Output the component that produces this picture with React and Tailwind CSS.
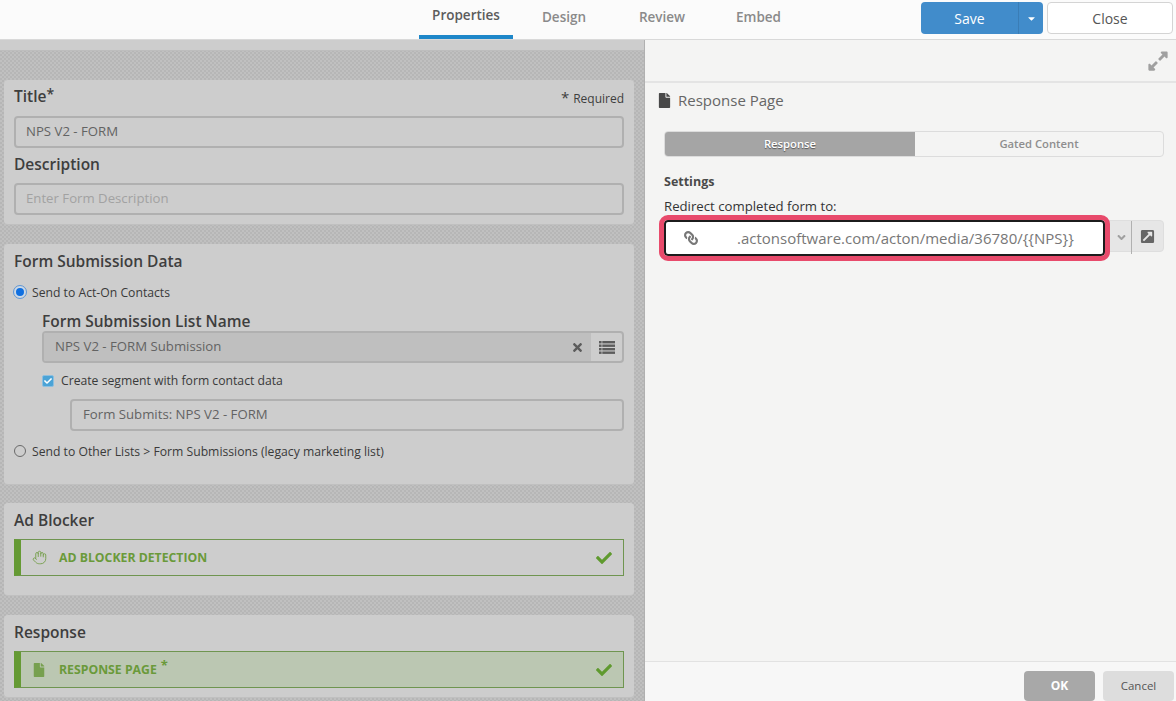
import React from "react";
import { FaFile, FaLink, FaTimes, FaCheck, FaExpandAlt, FaExternalLinkSquareAlt, FaCaretDown, FaAngleDown } from "react-icons/fa";
import { Hand } from "lucide-react";

function Card({ className, children }) {
  return <section className={"mx-1 w-[630px] shrink-0 bg-[#cdcdcd] rounded-sm border-b border-[#c0c0c0] px-2.5 " + className}>{children}</section>;
}

function Heading({ children, className = "" }) {
  return <h2 className={"text-[15.5px] leading-[22px] font-semibold text-[#3e3e3e] " + className}>{children}</h2>;
}

function Field({ children, className = "", muted }) {
  return (
    <div className={"h-8 flex items-center px-[10px] rounded border-2 border-[#b0b0b0] text-[13.2px] " + (muted ? "text-[#a2a2a2] " : "text-[#636363] ") + className}>
      {children}
    </div>
  );
}

function ListIcon() {
  return (
    <svg width="16" height="13" viewBox="0 0 16 13" fill="#5c5c5c">
      <rect x="0" y="0" width="16" height="2.4" />
      <rect x="0" y="3.5" width="16" height="2.4" />
      <rect x="0" y="7" width="16" height="2.4" />
      <rect x="0" y="10.5" width="16" height="2.4" />
      <rect x="2.6" y="0" width="0.7" height="13" fill="#cdcdcd" />
    </svg>
  );
}

function Accordion({ icon, label, star, active }) {
  return (
    <div className={"h-[37px] flex items-center border border-[#6f9550] border-l-[7px] border-l-[#659a34] pl-[11px] pr-[11px] " + (active ? "bg-[#bbc7b2]" : "")}>
      <span className="w-[27px] text-[#77a04f] text-[14px]">{icon}</span>
      <span className="mt-px text-[12.25px] font-bold text-[#6a9a3a]">{label}</span>
      {star && <span className="ml-1 text-[13px] leading-none font-bold text-[#6a9a3a] -mt-2">*</span>}
      <FaCheck className="ml-auto text-[#5f9a2e] text-[16px]" />
    </div>
  );
}

function Tab({ children, active, className }) {
  return (
    <div className={"h-full flex items-center justify-center text-[13.5px] font-semibold " + (active ? "text-[#5c5c5c] border-b-[4px] border-[#1e87c9] pb-[5px]" : "text-[#8a8a8a] pb-[5px]") + " " + className}>
      {children}
    </div>
  );
}

export default function App() {
  return (
    <div className="w-[1176px] h-[701px] overflow-hidden flex flex-col bg-white font-['Open_Sans',sans-serif] text-[#333]">
      <header className="h-10 shrink-0 flex bg-[#fbfbfb] border-b border-[#d9d9d9]">
        <nav className="ml-[419px] h-full flex">
          <Tab active className="w-[94px]">Properties</Tab>
          <Tab className="w-[102px]">Design</Tab>
          <Tab className="w-[94px]">Review</Tab>
          <Tab className="w-[100px]"><span className="-ml-[1px]">Embed</span></Tab>
        </nav>
        <div className="flex h-8 mt-[2px] ml-auto mr-[3px] gap-1">
          <div className="flex w-[122px] h-8 rounded bg-[#418ccb] text-white text-[14px] overflow-hidden">
            <div className="flex-1 flex items-center justify-center border-r border-[#3a7db6]">Save</div>
            <div className="w-6 flex items-center justify-center text-[11px]"><FaCaretDown /></div>
          </div>
          <div className="w-[126px] h-8 rounded border border-[#d4d4d4] bg-white flex items-center justify-center text-[14px] text-[#555]">Close</div>
        </div>
      </header>

      <div className="flex-1 flex min-h-0">
        <main className="w-[645px] shrink-0 overflow-hidden flex flex-col bg-[repeating-conic-gradient(#b6b6b6_0_25%,#c0c0c0_0_50%)] bg-[length:4px_4px] border-r border-[#b0b0b0]">
          <div className="h-[11px] shrink-0 bg-[#cdcdcd] border-b border-[#bdbdbd]" />
          <div className="h-[29px] shrink-0" />
          <Card className="h-[145px] pt-[3px]">
            <div className="flex justify-between h-[22px]">
              <Heading>Title<span className="text-[14px] align-[3px]">*</span></Heading>
              <span className="text-[12px] leading-[32px] text-[#3e3e3e]"><span className="text-[15px] leading-none mr-1">*</span>Required</span>
            </div>
            <Field className="mt-[11px]">NPS V2 - FORM</Field>
            <Heading className="mt-[5px]">Description</Heading>
            <Field muted className="mt-[8px]">Enter Form Description</Field>
          </Card>
          <div className="h-[19px] shrink-0" />
          <Card className="h-[241px] pt-[6px]">
            <Heading>Form Submission Data</Heading>
            <div className="mt-[11px] flex items-center gap-[6px] text-[12.2px] text-[#3a3a3a] h-5">
              <span className="w-3 h-3 rounded-full border-[2px] border-[#cdd9e6] bg-[#0f6fe0] outline outline-1 outline-[#5f97d6] -mt-[3px]" />
              Send to Act-On Contacts
            </div>
            <div className="ml-7">
              <Heading className="mt-[7px] leading-[16px]">Form Submission List Name</Heading>
              <div className="-mt-px h-8 flex rounded border-2 border-[#b0b0b0] overflow-hidden text-[13.2px] text-[#636363]">
                <div className="flex-1 bg-[#bfbfbf] flex items-center pl-[11px] pr-[7px]">
                  NPS V2 - FORM Submission
                  <FaTimes className="ml-auto text-[#5c5c5c] text-[13px]" />
                </div>
                <div className="w-[31px] flex items-center justify-center"><ListIcon /></div>
              </div>
              <div className="mt-[9px] flex items-center gap-[7px] text-[12.2px] text-[#3a3a3a] h-[18px]">
                <span className="w-3 h-3 rounded-[2px] bg-[#4ba3d6] flex items-center justify-center text-white text-[8px] border border-[#8cbfe0]"><FaCheck /></span>
                Create segment with form contact data
              </div>
              <Field className="mt-[9px] ml-7 pl-[11px]">Form Submits: NPS V2 - FORM</Field>
            </div>
            <div className="mt-[11px] flex items-center gap-[6px] text-[12.2px] text-[#3a3a3a] h-5">
              <span className="w-3 h-3 rounded-full border border-[#6a6a6a] -mt-[3px]" />
              Send to Other Lists &gt; Form Submissions (legacy marketing list)
            </div>
          </Card>
          <div className="h-[18px] shrink-0" />
          <Card className="h-[93px] pt-[6px]">
            <Heading>Ad Blocker</Heading>
            <div className="mt-[8px]"><Accordion icon={<Hand size={15} strokeWidth={1.5} />} label="AD BLOCKER DETECTION" /></div>
          </Card>
          <div className="h-[19px] shrink-0" />
          <Card className="h-[83px] pt-[6px]">
            <Heading>Response</Heading>
            <div className="mt-[8px]"><Accordion active icon={<FaFile />} label="RESPONSE PAGE" star /></div>
          </Card>
        </main>

        <aside className="flex-1 flex flex-col bg-[#f4f4f3]">
          <div className="h-[43px] shrink-0 flex items-center justify-end pr-[7px] border-b-2 border-[#e4e4e4] text-[#a0a0a0] text-[22px]"><FaExpandAlt /></div>
          <div className="flex-1 pl-[19px] pr-[12px]">
            <div className="-ml-[7px] mt-[7px] flex items-center gap-[6px] h-[20px] text-[15px] text-[#666]">
              <FaFile className="text-[#484848] text-[15px]" /> Response Page
            </div>
            <div className="mt-[21px] h-[26px] flex rounded border border-[#dcdcdc] overflow-hidden text-[11.25px] font-semibold">
              <div className="w-[250px] bg-[#a5a5a5] text-white flex items-center justify-center [text-shadow:0_1px_1px_#555]">Response</div>
              <div className="flex-1 flex items-center justify-center text-[#8e8e8e]">Gated Content</div>
            </div>
            <div className="mt-[16px] text-[12.5px] leading-[18px] font-bold text-[#4a4a4a]">Settings</div>
            <div className="mt-[6px] text-[13.2px] leading-[18px] text-[#333]">Redirect completed form to:</div>
            <div className="mt-[5px] flex items-start">
              <div className="relative z-10 w-[441px] h-[36px] flex items-center rounded-[4px] border-2 border-[#1c1c1c] bg-white outline-[5px] outline outline-[#e84a6b] pl-[18px] text-[#777] text-[15px]">
                <FaLink className="text-[#777] text-[14px] shrink-0 mr-[39px] -scale-x-100" />
                <span className="whitespace-nowrap">.actonsoftware.com/acton/media/36780/&#123;&#123;NPS&#125;&#125;</span>
              </div>
              <div className="flex-1 h-[32px] flex bg-[#e6e6e6] rounded-r border border-[#dedede]">
                <div className="w-[26px] pl-[6px] flex items-center justify-center text-[#a0a0a0] text-[13px] border-r border-[#b0b0b0] mb-[-3px]"><FaAngleDown /></div>
                <div className="flex-1 flex items-center justify-center text-[#666] text-[15px]"><FaExternalLinkSquareAlt /></div>
              </div>
            </div>
          </div>
          <div className="h-[40px] shrink-0 flex items-start justify-end gap-2 pt-[9px] pr-[2px] bg-[#f7f7f7] border-t border-[#e2e2e2]">
            <div className="w-[71px] h-[30px] rounded bg-[#a8a8a8] text-white text-[12px] font-bold flex items-center justify-center">OK</div>
            <div className="w-[71px] h-[30px] rounded bg-[#dddddd] text-[#555] text-[11.5px] font-medium flex items-center justify-center">Cancel</div>
          </div>
        </aside>
      </div>
    </div>
  );
}
